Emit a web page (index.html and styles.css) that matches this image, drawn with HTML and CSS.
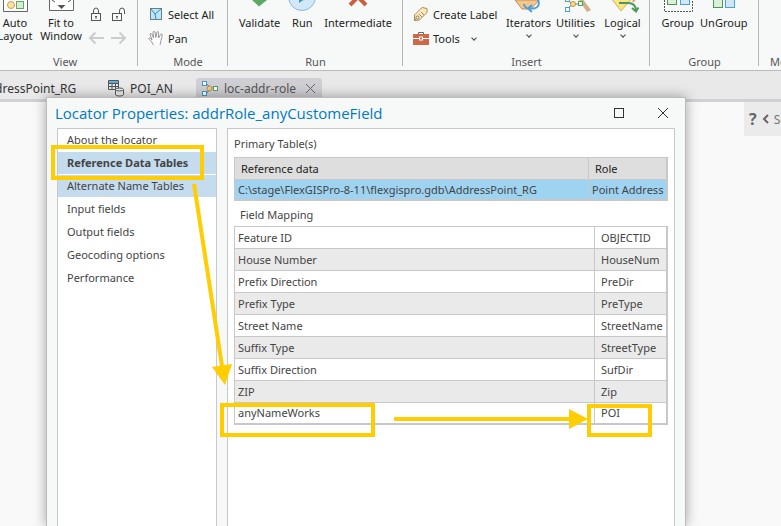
FILE: index.html
```
<!DOCTYPE html>
<html lang="en">
<head>
  <meta charset="UTF-8">
  <meta name="viewport" content="width=device-width, initial-scale=1.0">
  <title>Locator Properties</title>
  <link rel="stylesheet" href="styles.css">
</head>
<body>
  <header class="ribbon">
    <section class="group group-view">
      <div class="tools">
        <button class="big">
          <svg width="32" height="14" viewBox="0 0 32 14"><path d="M4.500 0V11.500H28.500V0" fill="#fff" stroke="#666"/><circle cx="12" cy="5" r="3.500" fill="#fbe3a2" stroke="#c8a04c"/><rect x="17.500" y="1.500" width="7" height="7" fill="#d5eed0" stroke="#64a967"/></svg>
          <span>Auto</span><span>Layout</span>
        </button>
        <button class="big">
          <svg width="32" height="14" viewBox="0 0 32 14"><path d="M4.500 0V10.500H28.500V0" fill="#fff" stroke="#666"/><path d="M12.500 5h8l-4 4z" fill="#555"/><path d="M7 0l3 2M26 0l-3 2" stroke="#555"/></svg>
          <span>Fit to</span><span>Window</span>
        </button>
        <div class="icon-grid">
          <button class="icon" aria-label="Lock"><svg width="14" height="16" viewBox="0 0 14 16"><g fill="none" stroke="#555"><rect x="2.500" y="7.500" width="9" height="7"/><path d="M4.500 7V5a2.500 3 0 0 1 5 0v2M6 10.500h2M7 10v3"/></g></svg></button>
          <button class="icon" aria-label="Unlock"><svg width="16" height="16" viewBox="0 0 16 16"><g fill="none" stroke="#555"><rect x="1.500" y="7.500" width="9" height="7"/><path d="M8.500 7V5a2.500 3 0 0 1 5 0v3M5 10.500h2M6 10v3"/></g></svg></button>
          <button class="icon" aria-label="Back"><svg width="16" height="14" viewBox="0 0 16 14"><path d="M7.500 1.500L2 7l5.500 5.500M2 7h14" fill="none" stroke="#ccc" stroke-width="2"/></svg></button>
          <button class="icon" aria-label="Forward"><svg width="16" height="14" viewBox="0 0 16 14"><path d="M8.500 1.500L14 7l-5.500 5.500M14 7H0" fill="none" stroke="#ccc" stroke-width="2"/></svg></button>
        </div>
      </div>
      <h2>View</h2>
    </section>
    <section class="group group-mode">
      <div class="tools">
        <div class="stack">
          <button class="row"><svg width="16" height="16" viewBox="0 0 16 16"><rect x="2.500" y="2.500" width="11" height="11" fill="#b9e6fa" stroke="#6b7f8a"/><path d="M3 3l4 5 1 5M7 8l6-5" fill="none" stroke="#4687a5"/></svg>Select All</button>
          <button class="row"><svg width="16" height="16" viewBox="0 0 16 16"><path d="M5.500 15C4 12 2 9.500.500 8.500c1-1 2.500 0 3.500 1.500L2 4c.5-1 1.500-.5 2 .5L5.500 8 5 2c.5-1 1.500-1 2 0l.8 5.500L9 2c.5-1 1.500-.5 1.500.5L10.500 8 13 4c1-.5 1.500.5 1.200 1.200L13 10.500 12 15" fill="#fff" stroke="#999"/></svg>Pan</button>
        </div>
      </div>
      <h2>Mode</h2>
    </section>
    <section class="group group-run">
      <div class="tools">
        <button class="big"><svg width="32" height="14" viewBox="0 0 32 14"><path d="M8 0h15l-8 6.500z" fill="#5fa864"/></svg>Validate</button>
        <button class="big"><svg width="32" height="14" viewBox="0 0 32 14"><circle cx="16" cy="-3" r="13.500" fill="#d3e8f6" stroke="#7ebce2"/><path d="M13-9v12l6-4z" fill="#3c98d1"/></svg>Run</button>
        <button class="big"><svg width="32" height="14" viewBox="0 0 32 14"><path d="M8 5L20-7M24 5L12-7" stroke="#c9603f" stroke-width="4"/></svg>Intermediate</button>
      </div>
      <h2>Run</h2>
    </section>
    <section class="group group-insert">
      <div class="tools">
        <div class="stack">
          <button class="row"><svg width="16" height="16" viewBox="0 0 16 16"><path d="M1.500 9L9 1.500l5 1v4L6.500 14l-5 .5z" fill="#fbe8bd" stroke="#a8905c"/><circle cx="4.500" cy="11.500" r="1.500" fill="#fff" stroke="#8a7445"/><path d="M6 8l3 3M8 6l3 3M3.500 12L1 15" stroke="#a8905c"/></svg>Create Label</button>
          <button class="row"><svg width="16" height="16" viewBox="0 0 16 16"><path d="M5.500 5V2.500h5V5" fill="none" stroke="#666"/><rect y="4" width="16" height="11" fill="#cb6a48"/><path d="M0 8.500h16" stroke="#fff"/><rect x="6.500" y="7" width="3" height="3" fill="#cb6a48" stroke="#fff"/></svg>Tools<i class="chev"></i></button>
        </div>
        <button class="big"><svg width="32" height="14" viewBox="0 0 32 14"><path d="M2 0l7 9h9l8-9z" fill="#f6c58d" stroke="#c38d56"/><path d="M11 4a9 6 0 0 0 5 5M25 0c2 4 0 8-4 8.500h-6M19 5l-4 3.500 4 3.500" fill="none" stroke="#4ba0dc" stroke-width="2"/></svg>Iterators<i class="chev"></i></button>
        <button class="big"><svg width="32" height="14" viewBox="0 0 32 14"><path d="M22-2l9 12-4 2-8-12z" fill="#d2ae8c"/><path d="M7 0l6 4-5 4M13 4h7" stroke="#777" fill="none"/><rect x="5.500" y="-2.500" width="4" height="4" fill="#fff" stroke="#4ba0dc"/><rect x="5.500" y="7.500" width="4" height="4" fill="#fff" stroke="#4ba0dc"/><circle cx="13" cy="4" r="2.500" fill="#fbe08a" stroke="#bd9140"/><rect x="18.500" y="1.500" width="4" height="4" fill="#e5f5df" stroke="#54a25d"/></svg>Utilities<i class="chev"></i></button>
        <button class="big"><svg width="32" height="14" viewBox="0 0 32 14"><path d="M4-2L14 11 25-2z" fill="#fae488" stroke="#d2b44e"/><path d="M29-3l-3 5" stroke="#f1995b" stroke-width="2"/><path d="M12 3h9c6 0 8 3 8 8M25 8l4 3.500 2.500-4" fill="none" stroke="#4f985a" stroke-width="2"/></svg>Logical<i class="chev"></i></button>
      </div>
      <h2>Insert</h2>
    </section>
    <section class="group group-group">
      <div class="tools">
        <button class="big"><svg width="32" height="14" viewBox="0 0 32 14"><path d="M2.500 0v11.500h28V0" fill="none" stroke="#555" stroke-dasharray="2 1"/><rect x="5.500" y="-5.500" width="9" height="10" fill="#dcefd9" stroke="#4f985a"/><rect x="18.500" y="-5.500" width="9" height="10" fill="#cfe7f8" stroke="#4ba0dc"/></svg>Group</button>
        <button class="big"><svg width="32" height="14" viewBox="0 0 32 14"><rect x="5.500" y="-3.500" width="9" height="11" fill="#dcefd9" stroke="#4f985a"/><rect x="17.500" y="-3.500" width="9" height="11" fill="#cfe7f8" stroke="#4ba0dc"/></svg>UnGroup</button>
      </div>
      <h2>Group</h2>
    </section>
    <section class="group group-model">
      <h2>Model</h2>
    </section>
  </header>

  <nav class="tabs">
    <a class="tab tab-address" href="#">AddressPoint_RG</a>
    <a class="tab tab-poi" href="#">
      <svg width="17" height="17" viewBox="0 0 17 17"><path d="M1 1h9v3H1z" fill="#55b0e3"/><path d="M.5.500h10v9H.500zM.5 3.500h10M.5 6.500h10M4 3v7M7.500 3v7" fill="none" stroke="#555"/><path d="M7.500 9.500v5c0 2 8 2 8 0v-5" fill="#eee" stroke="#555"/><ellipse cx="11.500" cy="9.500" rx="4" ry="1.500" fill="#eee" stroke="#555"/></svg>
      POI_AN
    </a>
    <a class="tab active" href="#">
      <svg width="17" height="15" viewBox="0 0 17 15"><path d="M5 3l3 4-3 5M8 7h4" fill="none" stroke="#777"/><rect x=".5" y=".5" width="4" height="4" fill="#fff" stroke="#3d9ad6"/><rect x=".5" y="10.500" width="4" height="4" fill="#fff" stroke="#3d9ad6"/><circle cx="7.500" cy="7.500" r="2.500" fill="#f3c98a" stroke="#bd8b40"/><rect x="11.500" y="5.500" width="4" height="4" fill="#fff" stroke="#54a25d"/></svg>
      loc-addr-role
      <svg class="close" width="11" height="11" viewBox="0 0 11 11"><path d="M1 1l9 9M10 1l-9 9" stroke="#666"/></svg>
    </a>
  </nav>

  <main class="canvas">
    <div class="side-toggle"><b>?</b><svg width="7" height="10" viewBox="0 0 7 10"><path d="M6 1L2 5l4 4" fill="none" stroke="#666" stroke-width="2"/></svg>Select</div>
  </main>

  <div class="dialog" role="dialog" aria-labelledby="dialog-title">
    <div class="titlebar">
      <h1 id="dialog-title">Locator Properties: addrRole_anyCustomeField</h1>
      <button aria-label="Maximize"><svg width="12" height="12" viewBox="0 0 12 12"><rect x="1.500" y="1.500" width="9" height="9" fill="none" stroke="#333"/></svg></button>
      <button aria-label="Close"><svg width="12" height="12" viewBox="0 0 12 12"><path d="M1 1l10 10M11 1L1 11" stroke="#333"/></svg></button>
    </div>
    <div class="dialog-body">
      <nav class="pages">
        <a href="#">About the locator</a>
        <a href="#" class="selected">Reference Data Tables</a>
        <a href="#" class="hover">Alternate Name Tables</a>
        <a href="#">Input fields</a>
        <a href="#">Output fields</a>
        <a href="#">Geocoding options</a>
        <a href="#">Performance</a>
      </nav>
      <div class="page">
        <h3>Primary Table(s)</h3>
        <table class="primary">
          <thead>
            <tr><th>Reference data</th><th class="role">Role</th></tr>
          </thead>
          <tbody>
            <tr><td>C:\stage\FlexGISPro-8-11\flexgispro.gdb\AddressPoint_RG</td><td>Point Address</td></tr>
          </tbody>
        </table>
        <h3 class="mapping-title">Field Mapping</h3>
        <table class="mapping">
          <tr><td>Feature ID</td><td class="field">OBJECTID</td></tr>
          <tr><td>House Number</td><td class="field">HouseNum</td></tr>
          <tr><td>Prefix Direction</td><td class="field">PreDir</td></tr>
          <tr><td>Prefix Type</td><td class="field">PreType</td></tr>
          <tr><td>Street Name</td><td class="field">StreetName</td></tr>
          <tr><td>Suffix Type</td><td class="field">StreetType</td></tr>
          <tr><td>Suffix Direction</td><td class="field">SufDir</td></tr>
          <tr><td>ZIP</td><td class="field">Zip</td></tr>
          <tr><td>anyNameWorks</td><td class="field">POI</td></tr>
        </table>
      </div>
    </div>
  </div>

  <!-- yellow callouts over the dialog -->
  <svg class="callouts" width="781" height="526" viewBox="0 0 781 526">
    <g fill="none" stroke="#ffcd00" stroke-width="4">
      <rect x="53" y="147" width="149" height="31"/>
      <rect x="222" y="405" width="151" height="30"/>
      <rect x="589" y="406" width="61" height="29"/>
      <path d="M194 184L222 366M394 419H571"/>
    </g>
    <path d="M212 367L232 364L225 385zM569 409V429L588 419z" fill="#ffcd00"/>
  </svg>
</body>
</html>
```
FILE: styles.css
```
* {
  box-sizing: border-box;
}

body {
  margin: 0;
  height: 100vh;
  display: flex;
  flex-direction: column;
  overflow: hidden;
  background: #f9f9f9;
  color: #444;
  font-family: "Noto Sans", "Open Sans", sans-serif;
  font-size: 11px;
}

h1, h2, h3 {
  margin: 0;
  font-weight: normal;
}

a {
  color: inherit;
  text-decoration: none;
}

button {
  padding: 0;
  border: none;
  background: none;
  color: #222;
  font: inherit;
  cursor: pointer;
}

svg {
  flex: none;
}

/* ribbon */
.ribbon {
  flex: none;
  display: flex;
  height: 71px;
  overflow: hidden;
  background: #f7f9f8;
  border-bottom: 1px solid #bbb;
}

.group {
  position: relative;
  flex: none;
  display: flex;
  flex-direction: column;
  justify-content: flex-end;
}

.group::after {
  content: "";
  position: absolute;
  right: 0;
  top: 0;
  bottom: 4px;
  width: 1px;
  background: #b5b5b5;
}

.group-model::after {
  display: none;
}

.group h2 {
  height: 16px;
  line-height: 16px;
  font-size: 11px;
  text-align: center;
  color: #555;
}

.tools {
  flex: 1;
  display: flex;
}

.group-view { width: 151px; margin-left: -13px; padding-left: 5px; }
.group-mode { width: 90px; padding-left: 10px; }
.group-run { width: 175px; }
.group-insert { width: 247px; }
.group-group { width: 109px; }
.group-model { padding-left: 11px; }

.group-view .big { width: 46px; }
.group-run .tools { justify-content: center; gap: 6px; }
.group-insert .tools { padding-left: 10px; }
.group-insert .big { width: 47px; }
.group-insert .stack { width: 92px; }
.group-group .tools { justify-content: center; gap: 6px; }

.big {
  display: flex;
  flex-direction: column;
  align-items: center;
  line-height: 13px;
  white-space: nowrap;
}

.big svg {
  margin-bottom: 2px;
}

.chev {
  width: 4px;
  height: 4px;
  border: solid #444;
  border-width: 0 1px 1px 0;
  transform: rotate(45deg);
}

.big .chev {
  margin-top: 4px;
}

.row .chev {
  margin-left: 8px;
}

.icon-grid {
  display: grid;
  grid-template-columns: 23px 23px;
  grid-template-rows: 24px 24px;
  padding-top: 2px;
}

.icon svg {
  display: block;
  margin: auto;
}

.stack {
  padding-top: 2px;
}

.row {
  display: flex;
  align-items: center;
  gap: 4px;
  height: 24px;
  white-space: nowrap;
}

/* document tabs */
.tabs {
  flex: none;
  display: flex;
  align-items: flex-end;
  height: 31px;
  background: #e9e9e9;
  border-bottom: 3px solid #d0d0d4;
}

.tab {
  display: flex;
  align-items: center;
  gap: 5px;
  height: 21px;
  color: #333;
  font-size: 12px;
}

.tab-address { width: 116px; margin-left: -20px; }
.tab-poi { width: 100px; padding-left: 12px; }

.tab.active {
  padding: 0 6px;
  border-radius: 3px 3px 0 0;
  background: #d0d0d4;
  color: #555;
}

.close {
  margin-left: 4px;
}

.canvas {
  flex: 1;
}

.side-toggle {
  display: flex;
  align-items: center;
  gap: 5px;
  width: 37px;
  height: 34px;
  margin-left: auto;
  padding-left: 5px;
  overflow: hidden;
  background: #ebebeb;
  color: #777;
  font-size: 12px;
}

.side-toggle b {
  font-size: 16px;
  color: #666;
}

/* dialog window */
.dialog {
  position: absolute;
  top: 97px;
  left: 46px;
  right: 95px;
  bottom: 0;
  display: flex;
  flex-direction: column;
  background: #f7f9f8;
  border: 1px solid #bbb;
  border-bottom: none;
  box-shadow: 0 0 12px rgba(0, 0, 0, 0.35);
}

.titlebar {
  display: flex;
  align-items: center;
  gap: 32px;
  height: 30px;
  padding: 0 16px 0 8px;
}

.titlebar h1 {
  flex: 1;
  font-family: "Open Sans", "Noto Sans", sans-serif;
  font-size: 15px;
  color: #007ac2;
  white-space: nowrap;
}

.titlebar svg {
  display: block;
}

.dialog-body {
  flex: 1;
  display: flex;
  gap: 10px;
  padding: 0 10px;
}

.pages,
.page {
  background: #fff;
  border: 1px solid #c8c8c8;
  border-bottom: none;
}

.pages {
  width: 160px;
}

.pages a {
  display: block;
  height: 23px;
  padding-left: 9px;
  line-height: 22px;
  border-bottom: 1px solid #fff;
  white-space: nowrap;
}

.pages .selected {
  background: #c5dbee;
  font-weight: bold;
}

.pages .hover {
  background: #c5dbee;
}

.page {
  flex: 1;
  padding: 0 6px;
}

.page h3 {
  height: 28px;
  line-height: 30px;
  font-size: 11px;
}

.page .mapping-title {
  height: 25px;
  line-height: 28px;
  padding-left: 6px;
}

table {
  width: 100%;
  table-layout: fixed;
  border-collapse: separate;
  border-spacing: 0;
  border: 1px solid #c8c8c8;
  border-right-width: 2px;
  border-bottom-width: 2px;
}

th,
td {
  height: 22px;
  padding: 0 3px;
  border-bottom: 1px solid #c8c8c8;
  line-height: 16px;
  text-align: left;
  font-weight: normal;
  white-space: nowrap;
}

td + td,
th + th {
  border-left: 1px solid #c8c8c8;
}

tbody tr:last-child td {
  height: 20px;
  border-bottom: none;
}

.primary th {
  padding-left: 6px;
  background: #dedede;
  color: #222;
}

.primary tbody tr:last-child td {
  height: 19px;
  background: #9fd3f2;
}

.primary .role {
  width: 78px;
}

.mapping .field {
  width: 72px;
  padding-left: 6px;
}

.mapping tr:nth-child(even) {
  background: #eaeaea;
}

.callouts {
  position: absolute;
  top: 0;
  left: 0;
  pointer-events: none;
}
```
